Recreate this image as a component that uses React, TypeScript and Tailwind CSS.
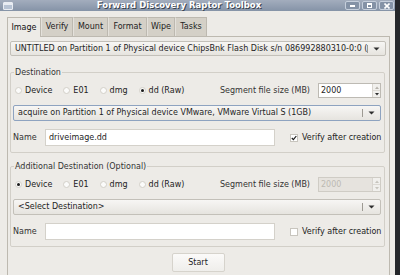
import React from "react";

const font = { fontFamily: '"DejaVu Sans", Verdana, sans-serif' };

function Arrow() {
  return (
    <svg width="7" height="4" viewBox="0 0 7 4" className="shrink-0">
      <path d="M0.5 0.5 L6.5 0.5 L3.5 3.5 Z" fill="#2e2e2e" />
    </svg>
  );
}

function Combo({ text, focused }: { text: string; focused?: boolean }) {
  return (
    <div
      className={
        "flex h-full items-center rounded-[2px] border bg-gradient-to-b from-[#f7f6f4] to-[#e6e4df] " +
        (focused ? "border-[#8ea3c0]" : "border-[#c3c0b9]")
      }
    >
      <div className="flex-1 whitespace-nowrap pl-[4px] text-[#1e1e1e]">{text}</div>
      <div className="flex h-full items-center gap-[5px] pr-[5px]">
        <div className="h-[8px] w-px bg-[#9d9a93]" />
        <Arrow />
      </div>
    </div>
  );
}

function Radio({ label, checked }: { label: string; checked?: boolean }) {
  return (
    <div className="flex items-center gap-[3px]">
      <div className="flex h-[7px] w-[7px] items-center justify-center rounded-full border border-[#d3d0c9] bg-[#fbfbfa]">
        {checked && <div className="h-[3px] w-[3px] rounded-full bg-[#1a1a1a]" />}
      </div>
      <span className="text-[#222]">{label}</span>
    </div>
  );
}

function Spin({ disabled }: { disabled?: boolean }) {
  return (
    <div
      className={
        "flex h-[15px] w-[63px] border " +
        (disabled ? "border-[#cfccc5] bg-[#e6e3de]" : "border-[#bdbab3] bg-white")
      }
    >
      <div className={"flex-1 pl-[2px] leading-[13px] " + (disabled ? "text-[#bdbab3]" : "text-[#1e1e1e]")}>
        2000
      </div>
      <div className="flex w-[8px] flex-col border-l border-[#d8d5cf] bg-[#f1f0ed]">
        <div className="flex flex-1 items-center justify-center border-b border-[#dcd9d3]">
          <svg width="4" height="3" viewBox="0 0 4 3">
            <path d="M0 3 L2 0.5 L4 3 Z" fill={disabled ? "#c7c4bd" : "#b5b2ab"} />
          </svg>
        </div>
        <div className="flex flex-1 items-center justify-center">
          <svg width="4" height="3" viewBox="0 0 4 3">
            <path d="M0 0 L4 0 L2 2.5 Z" fill={disabled ? "#c7c4bd" : "#2e2e2e"} />
          </svg>
        </div>
      </div>
    </div>
  );
}

function Check({ checked }: { checked?: boolean }) {
  return (
    <div className="flex items-center gap-[4px]">
      <div className="flex h-[8px] w-[8px] items-center justify-center border border-[#c8c5be] bg-white">
        {checked && (
          <svg width="6" height="6" viewBox="0 0 6 6">
            <path d="M0.8 3 L2.4 4.7 L5.3 1" stroke="#1a1a1a" strokeWidth="1.2" fill="none" />
          </svg>
        )}
      </div>
      <span className="text-[#222]">Verify after creation</span>
    </div>
  );
}

function DestinationBox({
  title,
  device,
  combo,
  name,
  verify,
  disabled,
  focused,
}: {
  title: string;
  device?: boolean;
  combo: string;
  name: string;
  verify?: boolean;
  disabled?: boolean;
  focused?: boolean;
}) {
  return (
    <fieldset className="mr-[1px] rounded-[2px] border border-[#d2cfc8] px-[2px] pb-[6px]">
      <legend className="ml-[1px] px-[1px] leading-[11px] text-[#333]">{title}</legend>
      <div className="mt-[5px] flex h-[15px] items-center pr-[1px]">
        <div className="flex flex-1 items-center gap-[11px] pl-[2px]">
          <Radio label="Device" checked={device} />
          <Radio label="E01" />
          <Radio label="dmg" />
          <Radio label="dd (Raw)" checked={!device} />
        </div>
        <span className="mr-[8px] text-[#333]">Segment file size (MB)</span>
        <Spin disabled={disabled} />
      </div>
      <div className="mt-[7px] mr-[1px] h-[16px]">
        <Combo text={combo} focused={focused} />
      </div>
      <div className="mt-[8px] flex h-[17px] items-center">
        <span className="w-[32px] text-[#333]">Name</span>
        <div className="h-full w-[230px] border border-[#d4d1ca] bg-white pl-[3px] leading-[15px] text-[#1e1e1e]">
          {name}
        </div>
        <div className="ml-[15px]">
          <Check checked={verify} />
        </div>
      </div>
    </fieldset>
  );
}

export default function App() {
  const tabs = ["Image", "Verify", "Mount", "Format", "Wipe", "Tasks"];
  const widths = ["w-[34px]", "w-[32px]", "w-[35px]", "w-[39px]", "w-[28px]", "w-[32px]"];

  return (
    <div className="flex h-[275px] w-[400px] overflow-hidden bg-[#25272b] text-[8px]" style={font}>
      <div className="flex h-full w-[395px] flex-col bg-[#edebe7]">
        {/* title bar */}
        <div className="flex h-[11px] items-center bg-gradient-to-b from-[#a3adbd] to-[#8593a7]">
          <div className="ml-[3px] h-[8px] w-[10px] rounded-[1px] border border-[#e8ecf2] bg-[#b7c3d4]">
            <div className="h-[2px] bg-[#e8ecf2]" />
          </div>
          <div className="flex-1 text-center text-[8.5px] font-bold leading-[11px] text-white [text-shadow:1px_1px_0_#3b4350]">
            Forward Discovery Raptor Toolbox
          </div>
          <div className="mr-[1px] flex gap-[2px]">
            <div className="flex h-[9px] w-[15px] items-end justify-center rounded-[2px] border border-[#c6cfdc] bg-[#8492a6] pb-[2px]">
              <div className="h-[2px] w-[5px] bg-white" />
            </div>
            <div className="flex h-[9px] w-[15px] items-center justify-center rounded-[2px] border border-[#c6cfdc] bg-[#8492a6]">
              <div className="h-[5px] w-[5px] border border-white border-t-2" />
            </div>
            <div className="flex h-[9px] w-[15px] items-center justify-center rounded-[2px] border border-[#c6cfdc] bg-[#8492a6]">
              <svg width="6" height="6" viewBox="0 0 6 6">
                <path d="M0.5 0.5 L5.5 5.5 M5.5 0.5 L0.5 5.5" stroke="white" strokeWidth="1.6" />
              </svg>
            </div>
          </div>
        </div>

        <div className="flex flex-1 flex-col pl-[7px] pr-[5px] pt-[6px]">
          {/* tabs */}
          <div className="flex h-[19px] items-end">
            {tabs.map((t, i) => (
              <div
                key={t}
                className={
                  widths[i] +
                  " flex items-center justify-center border-x border-t border-[#bdb9b0] " +
                  (i === 0
                    ? "relative z-10 -mb-px h-[20px] bg-[#edebe7] text-[#111]"
                    : "h-[19px] border-l-[#e4e1db] bg-[#d4d0c7] text-[#222]")
                }
              >
                {t}
              </div>
            ))}
          </div>

          {/* pane */}
          <div className="flex flex-1 flex-col border border-b-0 border-[#bdb9b0] bg-[#edebe7] pl-[2px] pr-[3px] pt-[4px]">
            <div className="h-[15px]">
              <Combo text="UNTITLED on Partition 1 of Physical device ChipsBnk Flash Disk s/n 086992880310-0:0 (" />
            </div>

            <div className="mt-[11px]">
              <DestinationBox
                title="Destination"
                combo="acquire on Partition 1 of Physical device VMware, VMware Virtual S (1GB)"
                name="driveimage.dd"
                verify
                focused
              />
            </div>

            <div className="mt-[8px]">
              <DestinationBox
                title="Additional Destination (Optional)"
                device
                combo="<Select Destination>"
                name=""
                disabled
              />
            </div>

            <div className="mt-[6px] flex justify-center">
              <div className="flex h-[19px] w-[53px] items-center justify-center rounded-[2px] border border-[#d6d3cc] bg-gradient-to-b from-[#fbfaf9] to-[#efeeeb] text-[#222]">
                Start
              </div>
            </div>
          </div>
        </div>
      </div>
    </div>
  );
}
